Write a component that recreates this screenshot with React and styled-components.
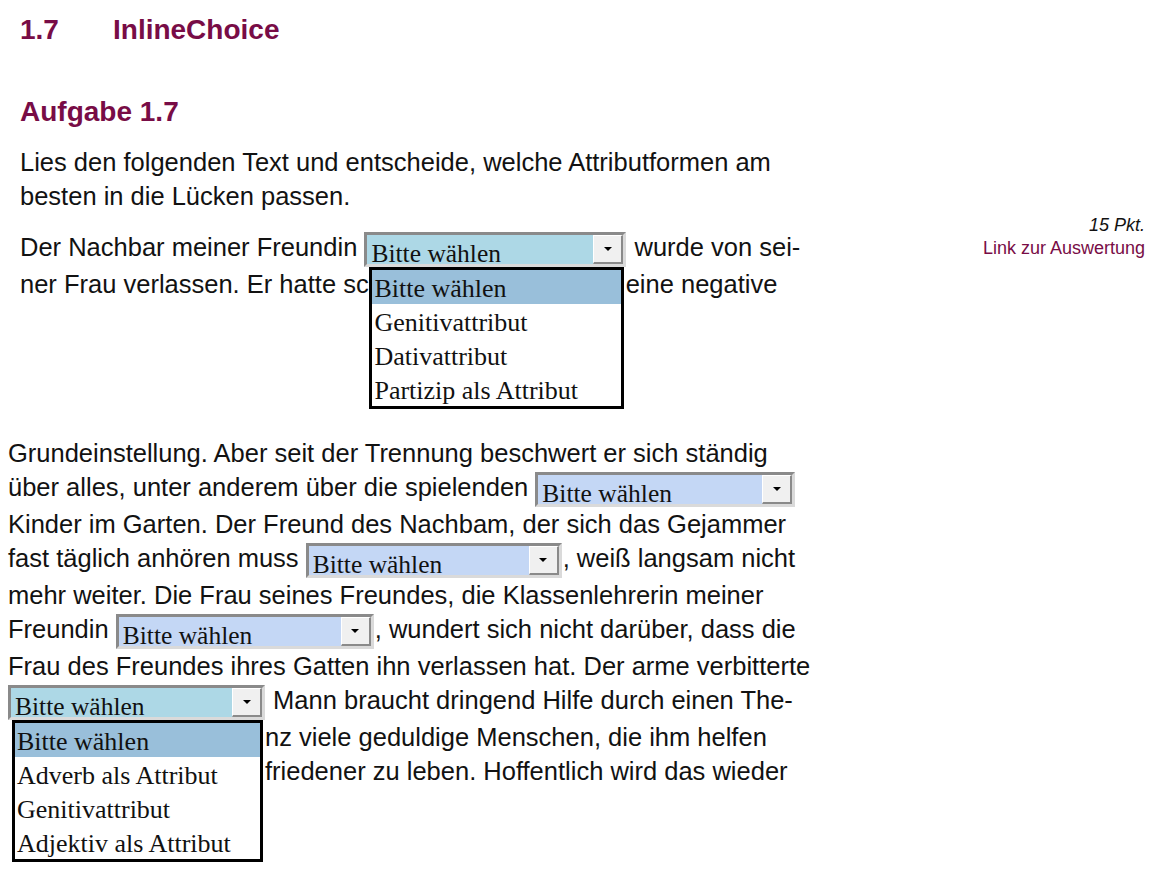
import React from "react";
import styled, { createGlobalStyle } from "styled-components";

const GlobalStyle = createGlobalStyle`
  body {
    margin: 0;
    background: #ffffff;
    color: #121212;
    font-family: "Liberation Sans", Arial, sans-serif;
  }
`;

const Page = styled.div`
  padding: 13px 23px 100px 8px;
`;

const Intro = styled.section`
  padding-left: 12px;
`;

const ChapterTitle = styled.h1`
  display: flex;
  margin: 0;
  font-size: 28px;
  line-height: 34px;
  font-weight: bold;
  color: #780c46;
`;

const ChapterNumber = styled.span`
  width: 93px;
`;

const TaskTitle = styled.h2`
  margin: 48px 0 0;
  font-size: 28px;
  line-height: 34px;
  font-weight: bold;
  color: #780c46;
`;

const Para = styled.p`
  margin: ${(p) => p.$top || 0}px 0 0;
  font-size: 25.5px;
  line-height: 34px;
  white-space: nowrap;
`;

/* room left where an open list hides the words of the line below */
const Hidden = styled.span`
  display: inline-block;
  width: ${(p) => p.$w}px;
`;

const TaskRow = styled.div`
  display: flex;
  align-items: flex-start;
`;

const Aside = styled.aside`
  flex: 1;
  margin-top: 1px;
  text-align: right;
  font-size: 18px;
  line-height: 23px;
`;

const Points = styled.div`
  font-style: italic;
`;

const EvalLink = styled.a`
  color: #780c46;
  text-decoration: none;
`;

const SelectWrap = styled.span`
  position: relative;
  display: inline-block;
  vertical-align: -6px;
  margin-right: 1px;
  z-index: ${(p) => (p.$open ? 2 : 1)};
`;

const SelectBox = styled.span`
  display: flex;
  box-sizing: border-box;
  width: ${(p) => p.$width}px;
  height: 35px;
  border: 3px solid;
  border-color: #8a8a8a #dadada #dadada #8a8a8a;
  background: ${(p) => (p.$open ? "#add8e6" : "#c4d7f5")};
`;

const SelectValue = styled.span`
  flex: 1;
  align-self: flex-end;
  padding-left: 4px;
  font-family: "Liberation Serif", "Times New Roman", serif;
  font-size: 25.5px;
  line-height: 21px;
  color: #111;
`;

const ArrowButton = styled.span`
  display: flex;
  align-items: center;
  justify-content: center;
  box-sizing: border-box;
  width: 30px;
  background: #f0f0f0;
  border-top: 1px solid #ffffff;
  border-left: 1px solid #ffffff;
  border-right: 2px solid #8a8a8a;
  border-bottom: 2px solid #8a8a8a;
`;

const Triangle = styled.span`
  width: 0;
  height: 0;
  border-left: 4px solid transparent;
  border-right: 4px solid transparent;
  border-top: 4px solid #000;
`;

const OptionList = styled.ul`
  position: absolute;
  top: 100%;
  left: ${(p) => p.$shift}px;
  box-sizing: border-box;
  width: ${(p) => p.$width}px;
  margin: 0;
  padding: 0;
  list-style: none;
  background: #ffffff;
  border: 3px solid #000;
`;

const OptionItem = styled.li`
  height: 34px;
  padding-left: 2px;
  font-family: "Liberation Serif", "Times New Roman", serif;
  font-size: 26px;
  line-height: 38px;
  color: #111;
  background: ${(p) => (p.$active ? "#99bfda" : "transparent")};
`;

const Body = styled.section`
  margin-top: 135px;
`;

const Choice = ({ width = 260, options, shift = 5, listWidth = 255 }) => (
  <SelectWrap $open={!!options}>
    <SelectBox $width={width} $open={!!options}>
      <SelectValue>Bitte wählen</SelectValue>
      <ArrowButton>
        <Triangle />
      </ArrowButton>
    </SelectBox>
    {options && (
      <OptionList $shift={shift} $width={listWidth}>
        {options.map((o, i) => (
          <OptionItem key={o} $active={i === 0}>
            {o}
          </OptionItem>
        ))}
      </OptionList>
    )}
  </SelectWrap>
);

export default function App() {
  return (
    <Page>
      <GlobalStyle />
      <Intro>
        <ChapterTitle>
          <ChapterNumber>1.7</ChapterNumber>
          <span>InlineChoice</span>
        </ChapterTitle>
        <TaskTitle>Aufgabe 1.7</TaskTitle>
        <Para $top={16}>
          Lies den folgenden Text und entscheide, welche Attributformen am
          <br />
          besten in die Lücken passen.
        </Para>
        <TaskRow>
          <Para $top={17}>
            Der Nachbar meiner Freundin{" "}
            <Choice
              width={262}
              options={[
                "Bitte wählen",
                "Genitivattribut",
                "Dativattribut",
                "Partizip als Attribut",
              ]}
            />{" "}
            wurde von sei-
            <br />
            ner Frau verlassen. Er hatte sc
            <Hidden $w={257} />
            eine negative
          </Para>
          <Aside>
            <Points>15 Pkt.</Points>
            <EvalLink href="#auswertung">Link zur Auswertung</EvalLink>
          </Aside>
        </TaskRow>
      </Intro>
      <Body>
        <Para>
          Grundeinstellung. Aber seit der Trennung beschwert er sich ständig
          <br />
          über alles, unter anderem über die spielenden <Choice />
          <br />
          Kinder im Garten. Der Freund des Nachbam, der sich das Gejammer
          <br />
          fast täglich anhören muss <Choice width={256} />, weiß langsam nicht
          <br />
          mehr weiter. Die Frau seines Freundes, die Klassenlehrerin meiner
          <br />
          Freundin <Choice width={258} />, wundert sich nicht darüber, dass die
          <br />
          Frau des Freundes ihres Gatten ihn verlassen hat. Der arme verbitterte
          <br />
          <Choice
            width={257}
            shift={4}
            listWidth={251}
            options={[
              "Bitte wählen",
              "Adverb als Attribut",
              "Genitivattribut",
              "Adjektiv als Attribut",
            ]}
          />{" "}
          Mann braucht dringend Hilfe durch einen The-
          <br />
          <Hidden $w={257} />
          nz viele geduldige Menschen, die ihm helfen
          <br />
          <Hidden $w={257} />
          friedener zu leben. Hoffentlich wird das wieder
        </Para>
      </Body>
    </Page>
  );
}
